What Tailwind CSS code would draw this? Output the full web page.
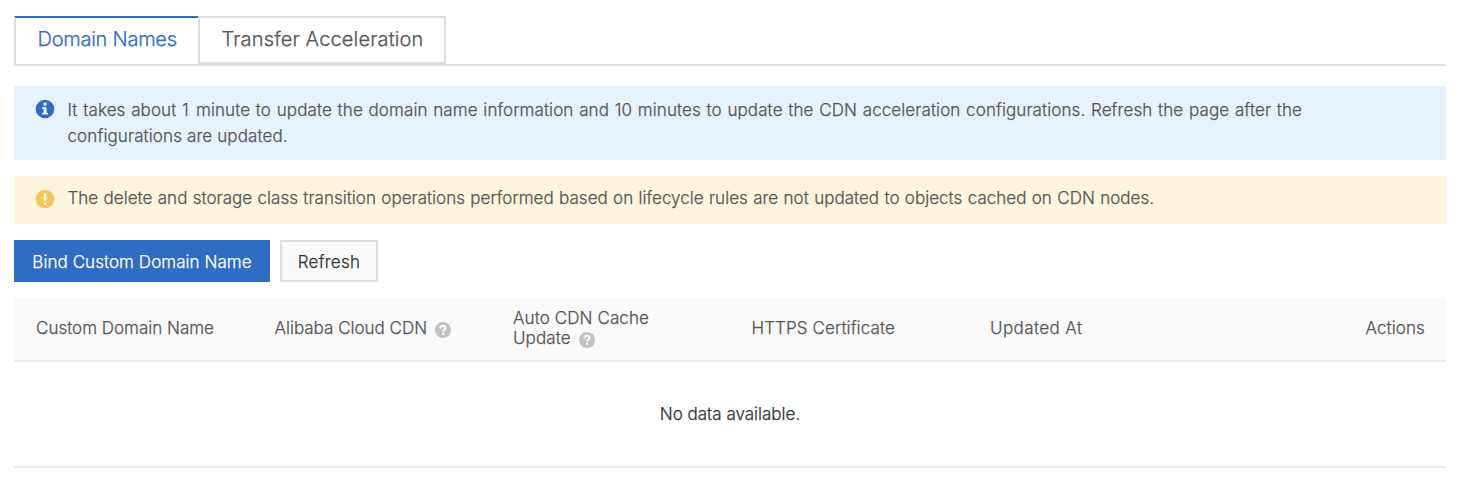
<!DOCTYPE html>
<html lang="en"><head><meta charset="utf-8"><title>Domain Names</title><script src="https://cdn.jsdelivr.net/npm/@tailwindcss/browser@4"></script></head>
<body class="bg-white font-['Inter',sans-serif] font-light text-[17px] leading-[20px] text-[#555] [-webkit-text-stroke:0.25px_currentColor]">
<main class="px-[14px] pt-4 mr-[6px]">
  <nav class="flex h-[50px] items-start border-b-2 border-[#dedede] text-[20px] leading-[42px] whitespace-nowrap">
    <a class="h-12 w-[184px] shrink-0 border-l-2 border-l-[#dedede] border-t-2 border-t-[#2f6dc5] pl-[21.5px] tracking-[-0.25px] text-[#2f6dc5]">Domain Names</a>
    <a class="h-12 w-[248px] shrink-0 border-2 border-[#dedede] pl-[21.5px] tracking-[0.16px]">Transfer Acceleration</a>
  </nav>
  <section class="mt-5 flex h-[74px] bg-[#e6f3fe] pt-[11px] pl-[21px] leading-[26px]">
    <svg class="mt-[2px] mr-[12.5px] size-5 shrink-0" viewBox="0 0 20 20"><circle cx="10" cy="10" r="9.3" fill="#2f6dc5"/><path fill="#fff" d="M8.6 3.8h2.9v2.7H8.6zM7 8.2h4.5v5.6H13v1.6H7v-1.6h1.7V9.8H7z"/></svg>
    <p><span class="tracking-[0.09px] [word-spacing:0.85px]">It takes about <span class="tracking-[1.5px]">1</span> minute to update the domain name information and 10 minutes to update the CDN acceleration configurations. Refresh the page after the</span><br><span class="tracking-[0.11px]">configurations are updated.</span></p>
  </section>
  <section class="mt-4 flex h-12 bg-[#fef5de] pt-[9px] pl-[21px] leading-[26px]">
    <svg class="mt-1 mr-[12.5px] size-5 shrink-0" viewBox="0 0 20 20"><circle cx="10" cy="10" r="9.3" fill="#f6c65c"/><path fill="#fff" d="M8.8 4.2h2.5v7.6H8.8zM8.8 13.4h2.5v2.3H8.8z"/></svg>
    <p class="tracking-[0.02px] [word-spacing:0.55px]">The delete and storage class transition operations performed based on lifecycle rules are not updated to objects cached on CDN nodes.</p>
  </section>
  <div class="mt-4 flex h-[42px] gap-[10px]">
    <button class="w-[256px] bg-[#2f6dc5] pt-[2px] tracking-[0.06px] text-white">Bind Custom Domain Name</button>
    <button class="w-[98px] border-2 border-[#dedede] bg-[#fafafa] pt-[2px] tracking-[0.25px] text-[#333]">Refresh</button>
  </div>
  <div class="mt-4 grid h-16 grid-cols-[238.5px_238.5px_238.5px_238.5px_1fr_auto] items-center border-b-2 border-[#ebebeb] bg-[#fafafa] pr-[21px] pb-[2px] pl-[22px] whitespace-nowrap">
    <div>Custom Domain Name</div>
    <div class="flex items-center gap-[7.5px]">Alibaba Cloud CDN<svg class="mt-[3px] size-4" viewBox="0 0 16 16"><circle cx="8" cy="8" r="8" fill="#c2c2c2"/><path fill="none" stroke="#fff" stroke-width="2.1" d="M5.5 6.5c0-3.5 5-3.3 5-.5 0 1.8-2.4 1.7-2.4 3.5"/><path fill="#fff" d="M7 10.7h2.2v2.1H7z"/></svg></div>
    <div class="tracking-[0.1px]">Auto CDN Cache<div class="flex items-center gap-2">Update<svg class="mt-[3px] size-4" viewBox="0 0 16 16"><circle cx="8" cy="8" r="8" fill="#c2c2c2"/><path fill="none" stroke="#fff" stroke-width="2.1" d="M5.5 6.5c0-3.5 5-3.3 5-.5 0 1.8-2.4 1.7-2.4 3.5"/><path fill="#fff" d="M7 10.7h2.2v2.1H7z"/></svg></div></div>
    <div class="tracking-[0.1px]">HTTPS Certificate</div>
    <div class="tracking-[0.4px]">Updated At</div>
    <div class="tracking-[0.1px]">Actions</div>
  </div>
  <div class="flex h-[106px] items-center justify-center border-b-2 border-[#ebebeb] text-[#333]">No data available.</div>
</main>
</body></html>
